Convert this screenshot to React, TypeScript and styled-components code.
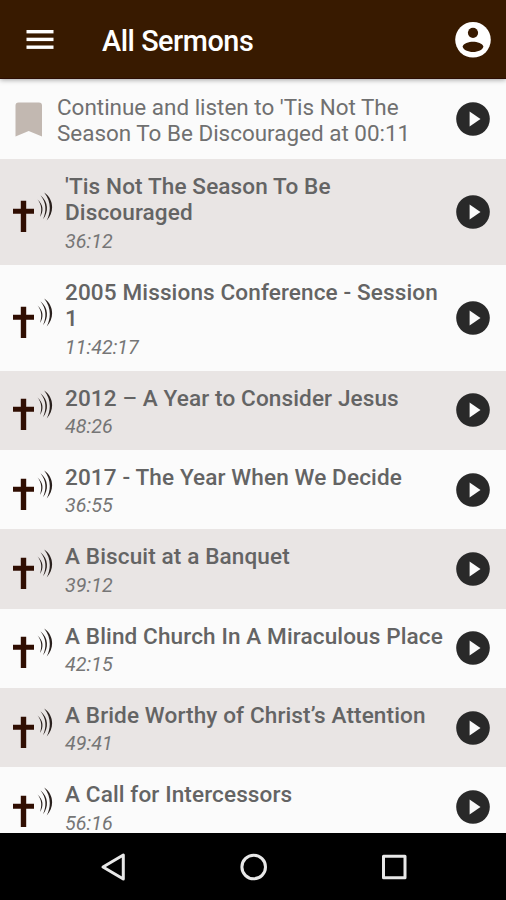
import React from "react";
import styled, { createGlobalStyle } from "styled-components";

const GlobalStyle = createGlobalStyle`
  * { box-sizing: border-box; }
  body { margin: 0; background: #000; font-family: Roboto, sans-serif; }
  svg { display: block; flex: none; }
`;

const Screen = styled.div`
  display: flex;
  flex-direction: column;
  width: 506px;
  height: 900px;
  overflow: hidden;
  background: #fbfbfb;
`;

const AppBar = styled.header`
  display: flex;
  align-items: center;
  flex: none;
  height: 79px;
  padding: 0 14px 0 26px;
  background: #381a00;
  border-bottom: 1px solid #2b0d03;
  box-shadow: 0 1px 5px rgba(0, 0, 0, 0.35);
  z-index: 1;
`;

const AppTitle = styled.h1`
  flex: 1;
  margin: 4px 0 0 48px;
  color: #fff;
  font-size: 28.8px;
  letter-spacing: -0.45px;
  line-height: 34px;
  font-weight: 500;
`;

const IconButton = styled.button`
  display: block;
  flex: none;
  padding: 0;
  border: 0;
  background: none;
`;

const List = styled.main`
  flex: 1;
  min-height: 0;
  overflow: hidden;
`;

const Resume = styled.section`
  display: flex;
  align-items: center;
  height: 80px;
  padding: 0 16px 0 15px;
`;

const ResumeText = styled.p`
  flex: 1;
  margin: 2px 0 0 15px;
  color: #707070;
  font-size: 22.45px;
  line-height: 26.4px;
  white-space: pre-line;
`;

const Row = styled.article<{ $shaded: boolean; $tall: boolean }>`
  display: flex;
  align-items: center;
  height: ${(p) => (p.$tall ? 105.9 : 79.3)}px;
  padding: 0 16px 0 12px;
  background: ${(p) => (p.$shaded ? "#e9e5e4" : "#fbfbfb")};
`;

const RowText = styled.div`
  flex: 1;
  margin: 1px 0 0 12px;
  white-space: nowrap;
`;

const RowTitle = styled.h2`
  margin: 0;
  color: #646464;
  font-size: 22.55px;
  letter-spacing: 0.12px;
  line-height: 26.4px;
  font-weight: 500;
  white-space: pre-line;
`;

const Duration = styled.p`
  margin: 5px 0 0;
  color: #767676;
  font-size: 19.7px;
  line-height: 19px;
  font-style: italic;
`;

const NavBar = styled.nav`
  display: flex;
  align-items: center;
  flex: none;
  height: 67px;
  padding-left: 99px;
  gap: 112px;
  background: #000;
`;

const MenuIcon = () => (
  <svg width="28" height="22" viewBox="0 0 28 22" fill="#fff">
    <rect x="0.5" y="2" width="27" height="3.4" />
    <rect x="0.5" y="9.7" width="27" height="3.4" />
    <rect x="0.5" y="17.5" width="27" height="3.4" />
  </svg>
);

const AccountIcon = () => (
  <svg width="37" height="37" viewBox="0 0 37 37">
    <circle cx="18" cy="18.8" r="17.8" fill="#fff" />
    <circle cx="18" cy="11.8" r="5.1" fill="#381a00" />
    <path d="M7.700 25.500C8 22.500 14 20.800 18 20.800S28 22.500 28.300 25.500C28 28.700 23 31 18 31S8 28.700 7.700 25.500Z" fill="#381a00" />
  </svg>
);

const PlayIcon = () => (
  <svg width="34" height="34" viewBox="0 0 34 34">
    <circle cx="17" cy="17" r="16.8" fill="#292929" />
    <path d="M13.600 9.500L24.500 17L13.600 24.500Z" fill="#fbfbfb" />
  </svg>
);

const BookmarkIcon = () => (
  <svg width="27" height="35" viewBox="0 0 27 35">
    <path d="M0.500 3.500Q0.500 0.500 3.500 0.500H24Q27 0.500 27 3.500V34.500L13.700 29L0.500 34.500Z" fill="#c2b8b1" />
  </svg>
);

const SermonIcon = () => (
  <svg width="41" height="42" viewBox="0 0 41 42">
    <path d="M8.800 9.800H14.200V17.800H22V22.800H14.200V41H8.800V22.800H1V17.800H8.800Z" fill="#300e02" />
    <g fill="#29201d">
      <path d="M32.200 1.500C42.300 8.500 42.300 21.500 34.700 29.500C39.300 20.500 39 10 32.200 1.500Z" />
      <path d="M28.500 4.300C36.500 11 36.800 21 31 28.300C34.700 20 34.500 12 28.500 4.300Z" />
      <path d="M25.500 8.500C31.500 14 31.800 20 28 26C30 19.500 30 14 25.500 8.500Z" />
    </g>
  </svg>
);

const BackIcon = () => (
  <svg width="28" height="30" viewBox="0 0 28 30" fill="none" stroke="#e8e8e8" strokeWidth="3" strokeLinejoin="round">
    <path d="M24.300 3V27L4 15Z" />
  </svg>
);

const HomeIcon = () => (
  <svg width="30" height="30" viewBox="0 0 30 30" fill="none" stroke="#e8e8e8" strokeWidth="3">
    <circle cx="14.700" cy="15" r="11.800" />
  </svg>
);

const RecentsIcon = () => (
  <svg width="30" height="30" viewBox="0 0 30 30" fill="none" stroke="#e8e8e8" strokeWidth="3" strokeLinejoin="round">
    <rect x="2.500" y="4.300" width="21.500" height="21.500" />
  </svg>
);

const sermons = [
  { title: "'Tis Not The Season To Be\nDiscouraged", duration: "36:12" },
  { title: "2005 Missions Conference - Session\n1", duration: "11:42:17" },
  { title: "2012 – A Year to Consider Jesus", duration: "48:26" },
  { title: "2017 - The Year When We Decide", duration: "36:55" },
  { title: "A Biscuit at a Banquet", duration: "39:12" },
  { title: "A Blind Church In A Miraculous Place", duration: "42:15" },
  { title: "A Bride Worthy of Christ’s Attention", duration: "49:41" },
  { title: "A Call for Intercessors", duration: "56:16" },
];

export default function App() {
  return (
    <Screen>
      <GlobalStyle />
      <AppBar>
        <IconButton aria-label="Menu"><MenuIcon /></IconButton>
        <AppTitle>All Sermons</AppTitle>
        <IconButton aria-label="Account"><AccountIcon /></IconButton>
      </AppBar>
      <List>
        <Resume>
          <BookmarkIcon />
          <ResumeText>{"Continue and listen to 'Tis Not The\nSeason To Be Discouraged at 00:11"}</ResumeText>
          <IconButton aria-label="Play"><PlayIcon /></IconButton>
        </Resume>
        {sermons.map((s, i) => (
          <Row key={s.title} $shaded={i % 2 === 0} $tall={s.title.includes("\n")}>
            <SermonIcon />
            <RowText>
              <RowTitle>{s.title}</RowTitle>
              <Duration>{s.duration}</Duration>
            </RowText>
            <IconButton aria-label="Play"><PlayIcon /></IconButton>
          </Row>
        ))}
      </List>
      <NavBar>
        <BackIcon />
        <HomeIcon />
        <RecentsIcon />
      </NavBar>
    </Screen>
  );
}
